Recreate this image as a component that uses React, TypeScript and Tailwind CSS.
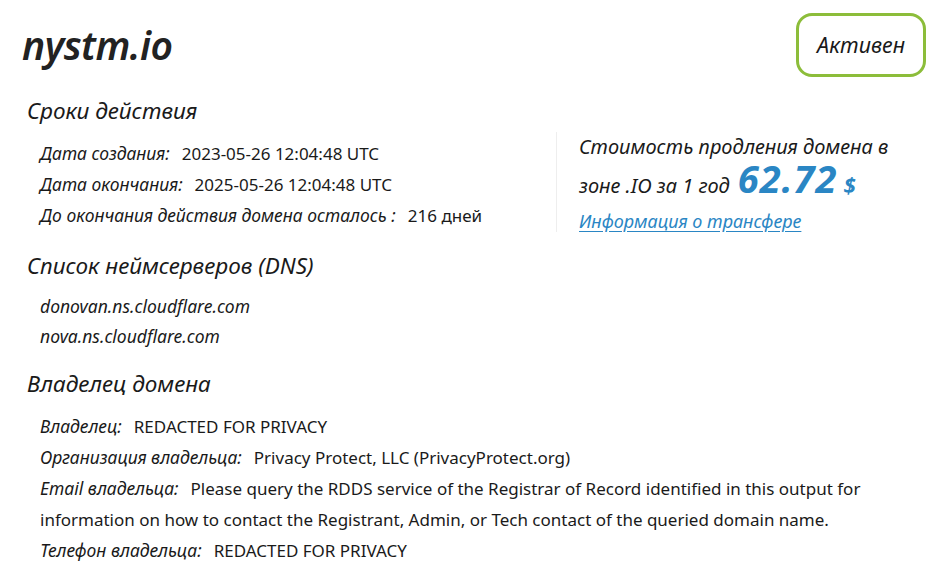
const font = { fontFamily: "'Noto Sans', 'Open Sans', sans-serif" }

const terms = [
  { label: "Дата создания:", value: "2023-05-26 12:04:48 UTC" },
  { label: "Дата окончания:", value: "2025-05-26 12:04:48 UTC" },
  { label: "До окончания действия домена осталось :", value: "216 дней" },
]

const nameservers = ["donovan.ns.cloudflare.com", "nova.ns.cloudflare.com"]

function Row({ label, value }: { label: string; value: string }) {
  return (
    <div className="text-[17px] leading-[31px] text-[#1a1a1a]">
      <span className="italic text-[17.5px]">{label}</span>
      <span className="ml-[12px]">{value}</span>
    </div>
  )
}

export default function App() {
  return (
    <div className="w-[938px] h-[574px] bg-white overflow-hidden text-[#1a1a1a]" style={font}>
      {/* Header */}
      <div className="flex items-start justify-between pl-[22px] pr-[12px] pt-[13px]">
        <h1 className="text-[39px] leading-[64px] font-semibold italic tracking-[-0.5px] text-[#222]">
          nystm.io
        </h1>
        <div className="w-[130px] h-[64px] border-[3px] border-[#8cbd3a] rounded-[16px] flex items-center justify-center">
          <span className="italic text-[21.5px] text-[#1a1a1a]">Активен</span>
        </div>
      </div>

      {/* Terms + price */}
      <div className="flex mt-[20px]">
        <div className="w-[556px] pl-[27px]">
          <h2 className="text-[22.5px] leading-[28px] italic">Сроки действия</h2>
          <div className="mt-[13px] pl-[13px]">
            {terms.map((t) => (
              <Row key={t.label} label={t.label} value={t.value} />
            ))}
          </div>
        </div>
        <div className="mt-[35px] h-[100px] border-l border-[#eeeeee] pl-[22px]">
          <div className="italic text-[20px] leading-[30px]">Стоимость продления домена в</div>
          <div className="italic text-[20px] leading-[32px] flex items-baseline">
            <span>зоне .IO за 1 год</span>
            <span className="ml-[8px] text-[38px] leading-[32px] font-bold text-[#2a86c4] tracking-[1px]">62.72</span>
            <span className="ml-[6px] text-[22px] font-bold text-[#2a86c4]">$</span>
          </div>
          <a href="#" className="block italic text-[18px] leading-[38px] text-[#2a86c4] underline underline-offset-[3px]">
            Информация о трансфере
          </a>
        </div>
      </div>

      {/* DNS */}
      <div className="pl-[27px] mt-[20px]">
        <h2 className="text-[22.5px] leading-[28px] italic">Список неймсерверов (DNS)</h2>
        <div className="mt-[11px] pl-[13px]">
          {nameservers.map((ns) => (
            <div key={ns} className="italic text-[17.5px] leading-[30px]">
              {ns}
            </div>
          ))}
        </div>
      </div>

      {/* Owner */}
      <div className="pl-[27px] mt-[19px]">
        <h2 className="text-[22.5px] leading-[28px] italic">Владелец домена</h2>
        <div className="mt-[13px] pl-[13px] w-[880px]">
          <Row label="Владелец:" value="REDACTED FOR PRIVACY" />
          <Row label="Организация владельца:" value="Privacy Protect, LLC (PrivacyProtect.org)" />
          <div className="text-[17px] leading-[31px]">
            <span className="italic text-[17.5px]">Email владельца:</span>
            <span className="ml-[12px]">
              Please query the RDDS service of the Registrar of Record identified in this output for information on
              how to contact the Registrant, Admin, or Tech contact of the queried domain name.
            </span>
          </div>
          <Row label="Телефон владельца:" value="REDACTED FOR PRIVACY" />
        </div>
      </div>
    </div>
  )
}
